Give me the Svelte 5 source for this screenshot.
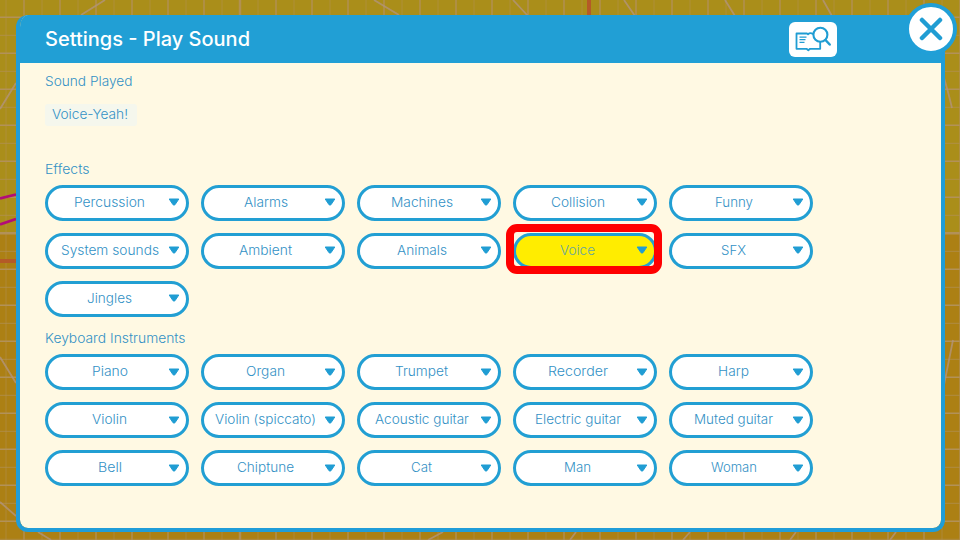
<script>
  const effects = [
    ['Percussion', 71], ['Alarms', 44], ['Machines', 62], ['Collision', 54], ['Funny', 38],
    ['System sounds', 98], ['Ambient', 53], ['Animals', 50], ['Voice', 35], ['SFX', 25],
    ['Jingles', 45]
  ];
  const instruments = [
    ['Piano', 36], ['Organ', 39], ['Trumpet', 53], ['Recorder', 60], ['Harp', 31],
    ['Violin', 35], ['Violin (spiccato)', 101], ['Acoustic guitar', 94], ['Electric guitar', 86], ['Muted guitar', 79],
    ['Bell', 24], ['Chiptune', 57], ['Cat', 21], ['Man', 27], ['Woman', 46]
  ];
  const columns = Array.from({ length: 54 }, (_, i) => 6 + i * 18);
  const rows = Array.from({ length: 30 }, (_, i) => 17 + i * 18);
</script>

{#snippet label(text, width, size, height, baseline)}
  <svg class="label" {width} {height} style:font-size="{size}px" aria-label={text}>
    <text x="0" y={baseline} textLength={width} lengthAdjust="spacingAndGlyphs">{text}</text>
  </svg>
{/snippet}

{#snippet group(items)}
  <div class="grid">
    {#each items as [name, width]}
      <button class="pill" class:selected={name === 'Voice'}>
        <span class="name">{@render label(name, width, 13, 20, 14)}</span>
        <svg class="arrow" width="12" height="9" viewBox="0 0 12 9"><path d="M1.2 1H10.8L7 6.700Q6 7.500 5 6.700Z" fill="#209dd3" stroke="#209dd3" stroke-width="1" stroke-linejoin="round" /></svg>
      </button>
    {/each}
  </div>
{/snippet}

<div class="screen">
  <svg class="board" width="960" height="540" viewBox="0 0 960 540">
    <rect width="960" height="233" fill="#aa8e1a" />
    <rect y="233" width="960" height="307" fill="#ac8014" />
    <g stroke="#b29159">
      {#each columns as x, i}
        <path d="M{x} 0V540" stroke-width={x === 240 ? 2.5 : i % 2 ? 1.5 : 1} opacity={i % 2 ? 0.9 : 0.5} />
      {/each}
      {#each rows as y, i}
        <path d="M0 {y + 0.3}H960" stroke-width={y === 233 ? 2.5 : i % 2 ? 1 : 1.5} opacity={i % 2 ? 0.7 : 1} />
      {/each}
    </g>
    <g stroke="#b1947a" stroke-width="1.8" fill="none" opacity=".8">
      <path d="M81 15L105 0M0 109L16 83M0 357L16 383M0 502L16 516M38 532L51 540M374 0L399 15M513 0L528 16M624 0L635 16M725 0L735 16M823 0L832 16M428 540L443 532M570 540L576 532M683 540L690 532M790 540L796 532M890 540L896 532M944 385L953 340M944 78Q948 91 952 108" />
    </g>
    <path d="M589 0V16M0 261H16" stroke="#b45a27" stroke-width="4" />
    <path d="M0 198.500L16 194.500M0 224.500L16 219" stroke="#b20d77" stroke-width="2.8" />
  </svg>

  <main class="panel">
    <header>
      <div class="title">{@render label('Settings - Play Sound', 205, 19.5, 30, 21.5)}</div>
      <button class="help" aria-label="Guide">
        <svg width="36" height="26" viewBox="0 0 36 26" fill="none" stroke="#209dd3">
          <path d="M19 7.200Q16.500 5 14 7.200L13 6.500H2.500V21.800H12.500L14.300 23.300L16.100 21.800H26.200V14.500" stroke-width="1.8" stroke-linejoin="round" />
          <path d="M5.500 10.100H12.500M5.500 12.700H11.500M5.500 15.300H10.500" stroke-width="1.300" />
          <circle cx="26.400" cy="7.700" r="7" stroke-width="2.100" fill="#fff" />
          <path d="M31.500 13L35.700 17.500" stroke-width="2.500" stroke-linecap="round" />
        </svg>
      </button>
    </header>
    <section class="played">
      {@render label('Sound Played', 87.5, 13, 20, 13.7)}
      <div class="sound">{@render label('Voice-Yeah!', 76, 13, 20, 14)}</div>
    </section>
    <section class="effects">
      {@render label('Effects', 44.5, 13, 20, 14)}
      {@render group(effects)}
    </section>
    <section class="instruments">
      {@render label('Keyboard Instruments', 140.5, 13, 20, 13.5)}
      {@render group(instruments)}
    </section>
  </main>

  <button class="close" aria-label="Close">
    <svg width="24" height="24" viewBox="0 0 24 24"><path d="M3 3L21 21M21 3L3 21" stroke="#209dd3" stroke-width="4.500" stroke-linecap="round" /></svg>
  </button>
  <div class="highlight"></div>
</div>

<style>
  .screen { position: relative; box-sizing: border-box; width: 960px; height: 540px; padding: 15px 15.5px 8px; overflow: hidden; font-family: Inter, "Open Sans", sans-serif; }
  .screen * { box-sizing: border-box; }
  .board { position: absolute; inset: 0; }
  .panel { position: relative; width: 929px; height: 517px; border: 4px solid #209dd8; border-top: 0; border-radius: 12px; background: #fff9e3; background-clip: padding-box; overflow: hidden; }
  header { display: flex; justify-content: space-between; align-items: center; height: 48px; padding: 0 104px 0 25px; background: #219fd5; }
  .label { display: block; overflow: visible; }
  .label text { fill: #3391c5; font-weight: 300; }
  .title .label text { fill: #fff; font-weight: 450; }
  button { border: 0; padding: 0; background: #fff; font: inherit; }
  .help { display: flex; align-items: center; justify-content: center; width: 48px; height: 35px; margin-top: 1px; border-radius: 6px; }
  .help svg { overflow: visible; margin-right: 1px; }
  .played { padding: 9px 25.5px 0; }
  .sound { display: flex; align-items: center; width: 92px; height: 22px; margin-top: 12px; padding: 0 7px; border-radius: 3px; background: #f5f7ed; }
  .effects { padding: 33.5px 25.5px 0; }
  .instruments { padding: 12.5px 25.5px 0; }
  .grid { display: grid; grid-template-columns: repeat(5, 144px); gap: 12px; margin-top: 5px; }
  .pill { display: flex; align-items: center; width: 144px; height: 36px; padding: 0 6px 0 0; border: 3px solid #229fd3; border-radius: 18px; }
  .name { display: flex; flex: none; justify-content: center; width: 123px; }
  .arrow { flex: none; margin-left: -3.5px; }
  .selected { background: #ffed00; }
  .selected .label text { fill: #65a4a0; }
  .close { position: absolute; left: 905px; top: 3.3px; display: flex; align-items: center; justify-content: center; width: 52px; height: 52px; border: 4.5px solid #209fd7; border-radius: 50%; }
  .close svg { flex: none; }
  .highlight { position: absolute; left: 506px; top: 224px; width: 156px; height: 50px; border: 8px solid #f00; border-radius: 11px; }
</style>
